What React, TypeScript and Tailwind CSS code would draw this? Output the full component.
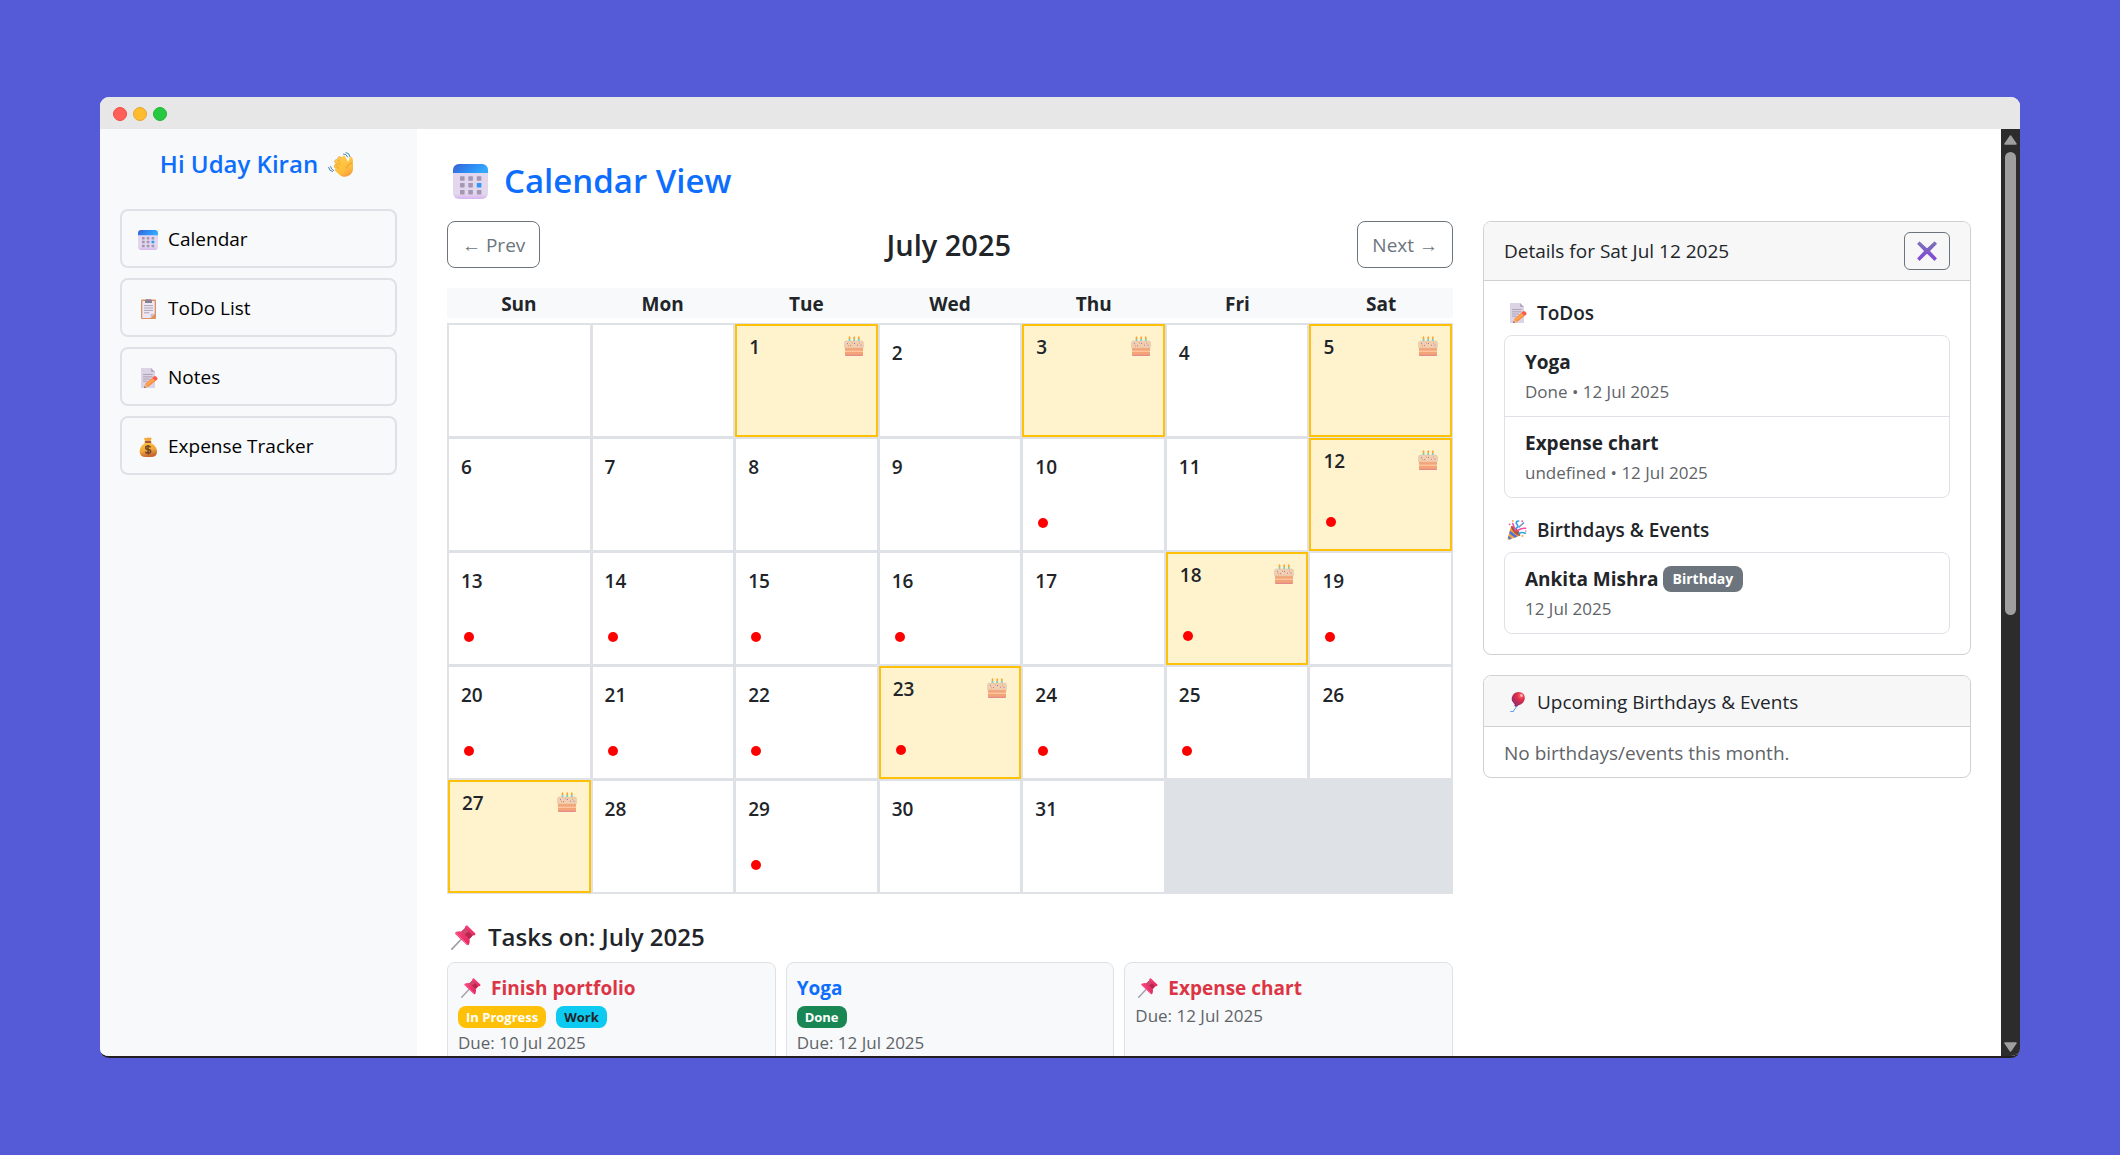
import type { ReactNode } from "react";

function Svg({ size, box = 20, children }: { size: string; box?: number; children: ReactNode }) {
  return (
    <svg viewBox={`0 0 ${box} ${box}`} className={`${size} shrink-0`} aria-hidden="true">
      {children}
    </svg>
  );
}

const S = "size-5";

function CalendarIcon({ size = S }: { size?: string }) {
  const cols = [7, 15.3, 23.8];
  const rows = [12.3, 19, 26];
  return (
    <Svg size={size} box={35}>
      <defs>
        <linearGradient id="calBand" x1="0" x2="1" y1="0" y2="0.3">
          <stop offset="0" stopColor="#3a5fd0" />
          <stop offset="0.5" stopColor="#2f86f0" />
          <stop offset="1" stopColor="#32a8ff" />
        </linearGradient>
        <linearGradient id="calPage" x1="0" x2="0" y1="0" y2="1">
          <stop offset="0.85" stopColor="#e3d7ee" />
          <stop offset="1" stopColor="#d6b4f0" />
        </linearGradient>
      </defs>
      <rect width="35" height="35" rx="6" fill="url(#calPage)" />
      <path d="M0 9V6a6 6 0 0 1 6-6h23a6 6 0 0 1 6 6v3z" fill="url(#calBand)" />
      {rows.map((y, r) =>
        cols.map((x, c) => (
          <rect key={`${r}${c}`} x={x} y={y} width="4.6" height="4.4" rx="0.6" fill={r === 1 && c === 2 ? "#2f97f7" : "#a596b3"} />
        )),
      )}
    </Svg>
  );
}

function ClipboardIcon() {
  return (
    <Svg size={S}>
      <rect x="3" y="0.5" width="15" height="19.5" rx="1" fill="#dd9160" />
      <path d="M4.3 2h12.4v13l-4 4H4.3z" fill="#eee8f5" />
      <path d="M16.7 14.8l-4.1 4.1v-3.2q0-.9.9-.9z" fill="#c9bfd6" />
      <path d="M7 2q0-1.7 1.7-1.7h3.6Q14 .3 14 2v2H7z" fill="#8b8192" />
      <path d="M6 6.6h9M6 9h9M6 11.400h9M6 13.800h5.500" stroke="#a49bb2" strokeWidth="0.9" />
    </Svg>
  );
}

function NotesIcon() {
  return (
    <Svg size={S}>
      <path d="M3 0h10l4 4v16H3z" fill="#dcd3e4" />
      <path d="M13 0l4 4h-3.200q-.8 0-.8-.8z" fill="#b5aabd" />
      <path d="M5 6.500h9.500M5 8.800h9.500M5 11h7M5 13.200h4.500" stroke="#a79db0" strokeWidth="0.9" />
      <path d="M6.200 19.800l1.200-4 7-6 3 3.200-7.400 6z" fill="#ff8a35" />
      <path d="M8.300 16l7.500-5.800 1.200 1.300-7.800 6.200z" fill="#ffa75a" />
      <path d="M6.200 19.800l1.200-4 2.800 3.100z" fill="#e8b48a" />
      <path d="M6.200 19.800l.5-1.600 1.100 1.200z" fill="#5a3a34" />
      <path d="M14.400 9.800l1.400-1.300q1.100-.9 2.300.1l1.100 1.200q.8 1.100-.2 2l-1.600 1.200z" fill="#fa5a4c" />
    </Svg>
  );
}

function MoneyBagIcon() {
  return (
    <Svg size={S}>
      <defs>
        <linearGradient id="bag" x1="0" x2="0.3" y1="0" y2="1">
          <stop offset="0" stopColor="#ffc63d" />
          <stop offset="0.6" stopColor="#f0a83a" />
          <stop offset="1" stopColor="#c8682f" />
        </linearGradient>
      </defs>
      <path d="M7.300 4.800L6 1.200q1-.8 2 0 1.400-1.300 3-.5 1.500-.8 2.700.4l-1.400 3.700z" fill="#f5a93a" />
      <path d="M7.400 5.500h5.200q6.400 4 6.400 9 0 5.500-6 5.500H7.600Q2 20 1.600 14.500q0-5 5.800-9z" fill="url(#bag)" />
      <rect x="6.600" y="4.100" width="6.800" height="2" rx="1" fill="#a7563b" />
      <path d="M12.600 10.400q-.7-1.300-2.500-1.300-2.400 0-2.400 1.700 0 1.500 2.400 1.800 2.600.3 2.600 2t-2.600 1.700q-2.100 0-2.700-1.500M10.100 7.900v9.700" fill="none" stroke="#71432c" strokeWidth="1.500" />
    </Svg>
  );
}

function WaveIcon() {
  return (
    <Svg size="size-[25px]" box={25}>
      <defs>
        <linearGradient id="hand" x1="0.2" x2="0.7" y1="0" y2="1">
          <stop offset="0" stopColor="#ffcb45" />
          <stop offset="0.7" stopColor="#ffbc3c" />
          <stop offset="1" stopColor="#f59a3c" />
        </linearGradient>
      </defs>
      <g strokeLinecap="round" fill="none">
        <path d="M14 18.500L8 14.200M14.500 15L8.500 9.500M16.500 12L11.500 6.500" stroke="#e09a35" strokeWidth="4.200" />
        <path d="M14 18.500L8 14.200M14.500 15L8.500 9.500M16.500 12L11.500 6.500M18.500 10.500L15.700 5.600" stroke="#ffc743" strokeWidth="3.400" />
      </g>
      <path d="M18.600 10.500q2.600-.9 2.900-4.600.5-1.500 1.900-.9 1.600.8 1.600 3.900v8.300q0 3.400-2.700 5.500-4.400 3.300-8.500 1.500-2.200-1-7.200-6.300l3-4L13 10l3.800-2.500z" fill="url(#hand)" />
      <path d="M23.600 11.200q-4.400 1.100-5.100 5M10.500 15.900l-2-1.600M11.800 12.800L9.800 11" fill="none" stroke="#df952f" strokeWidth="0.800" strokeLinecap="round" />
      <path d="M15.500 2q2.800-.3 4.100 2.900M18 .6q3.400.2 4 4M2.600 14.700q.3 2.900 3.100 3.900M.6 15.400q.4 3.400 3.800 4.200" fill="none" stroke="#4384ad" strokeWidth="1" strokeLinecap="round" />
    </Svg>
  );
}

function CakeIcon() {
  return (
    <Svg size={S}>
      <path d="M5.500 2.800v3M10.200 2.800v3M14.800 2.800v3" stroke="#61d3e3" strokeWidth="1.800" />
      <path d="M5.500 0q2 2 0 3.600-2-1.600 0-3.600zM10.200 0q2 2 0 3.600-2-1.600 0-3.600zM14.800 0q2 2 0 3.600-2-1.600 0-3.600z" fill="#ffa52e" />
      <path d="M1 11h18v7.500q0 1.500-1.500 1.500h-15Q1 20 1 18.500z" fill="#f2a477" />
      <path d="M1 14.600h18v1.300H1z" fill="#ffc9a5" />
      <path d="M1 18.800h18q0 1.200-1.500 1.200h-15Q1 20 1 18.800z" fill="#e5898d" />
      <path d="M.5 7Q.5 5 2.300 5h15.400q1.800 0 1.800 2v4.300q-.6 1.600-1.900.4-1.300 1.100-2.600 0-1.300 1.100-2.600 0-1.300 1.100-2.600 0-1.300 1.100-2.600 0-1.300 1.100-2.600 0-1.300 1.100-2.600 0-1.200 1.200-1.500-.4z" fill="#f0cfaf" stroke="#e2b795" strokeWidth="0.400" />
      <path d="M3 7.700h1M10 7.500h1M16.500 9.200h1" stroke="#8f6ee8" strokeWidth="1" />
      <path d="M6 9.600h1M13 9.200h1" stroke="#e4609a" strokeWidth="1" />
      <path d="M8 7h1M15 7.200h1M4 9.800h1" stroke="#ec8b3a" strokeWidth="0.800" />
    </Svg>
  );
}

function CrossIcon() {
  return (
    <Svg size={S}>
      <defs>
        <linearGradient id="cross" x1="0" x2="0" y1="0" y2="1">
          <stop offset="0" stopColor="#7a71b8" />
          <stop offset="1" stopColor="#8248d6" />
        </linearGradient>
      </defs>
      <path d="M2.500 1.200L10 8.300l7.500-7.100 1.700 1.600-7.100 7.200 7.100 7.400-1.700 1.600-7.500-7.200L2.500 19 .9 17.400 8 10 .9 2.800z" fill="url(#cross)" stroke="url(#cross)" strokeWidth="1.200" strokeLinejoin="round" />
    </Svg>
  );
}

function PartyIcon() {
  return (
    <Svg size={S}>
      <path d="M4 6.300L13.300 15.500 2 19.700q-1.600.3-1.400-1.200z" fill="#f5a93b" />
      <path d="M3 10.400l7.600 6.200-2.800 1.100-5.500-4.300zM1.600 15.600l3.300 3.100-2.400.9-1.500-1.500z" fill="#5572d8" />
      <path d="M4 6.300q1.600-1.300 5.500 2.500t3.800 6.700q-1.600 1.300-5.500-2.300T4 6.300z" fill="#b3523f" />
      <path d="M8.300 10.300q-1.300-3.300-2.500-6.800M10.500 10.500Q14.600 8 18.700 8.300" fill="none" stroke="#f74ba6" strokeWidth="1.600" strokeLinecap="round" />
      <path d="M9 8.500Q12.300 6.400 9.300 3.400q-.4-2.300 2.400-2.400M12 13.600q2.500-2 6.300-.4" fill="none" stroke="#35a4e6" strokeWidth="1.700" strokeLinecap="round" />
      <path d="M11.500 7.500l5.500-5" stroke="#3f8df0" strokeWidth="1.300" />
      <g fill="#ffa53c"><circle cx="5.800" cy="1" r="0.900" /><circle cx="14" cy="5" r="0.800" /><circle cx="15.500" cy="16" r="1" /></g>
      <g fill="#f74ba6"><circle cx="2.600" cy="4.300" r="0.900" /><circle cx="15.200" cy="1.200" r="0.900" /><circle cx="18.800" cy="11" r="0.700" /></g>
    </Svg>
  );
}

function BalloonIcon() {
  return (
    <Svg size={S}>
      <defs>
        <radialGradient id="balloon" cx="0.700" cy="0.250" r="0.800">
          <stop offset="0" stopColor="#ff6d6d" />
          <stop offset="0.350" stopColor="#e22f48" />
          <stop offset="1" stopColor="#8c2a70" />
        </radialGradient>
      </defs>
      <path d="M8.300 13.500q1.600 2-.3 3.300-1.300 1.200-1.600 2.800H3.200" fill="none" stroke="#4e9df3" strokeWidth="1" />
      <path d="M11.300 0Q18 .4 17.800 6.500 17 12 11 13.400l-1 1.300-2.600-.8.300-1.500Q4 9 4.800 5.600 6.200.2 11.300 0z" fill="url(#balloon)" />
      <ellipse cx="14.500" cy="3.600" rx="1.200" ry="1.500" fill="#ffc0bd" transform="rotate(-35 14.500 3.600)" />
    </Svg>
  );
}

function PinIcon({ size = S }: { size?: string }) {
  return (
    <Svg size={size} box={25}>
      <defs>
        <linearGradient id="pin" x1="0" x2="1" y1="0" y2="1">
          <stop offset="0" stopColor="#ff4f86" />
          <stop offset="1" stopColor="#d91e55" />
        </linearGradient>
      </defs>
      <path d="M10 14.500L.9 24.200" stroke="#a79fae" strokeWidth="1.800" strokeLinecap="round" />
      <path d="M4.500 9.200q-1-1.400.8-2.400 2.500-.9 5.200-.3L14 3.300q-.3-3.600 2.300-2.700l7.800 7.600q1.300 2.300-2.500 2.200l-3.200 3.500q.8 2.800-.5 5.700-1 1.200-2.200.2z" fill="url(#pin)" />
      <path d="M10.500 6.500l7.900 7.400 3.200-3.500L14 3.300z" fill="#b9264e" />
      <path d="M10.500 6.500L14 3.300l3.400 3.300-3.700 2.900z" fill="#cf4a6c" />
      <path d="M5 8.500l11.500 10.700" stroke="#ff6a9a" strokeWidth="1" strokeLinecap="round" />
    </Svg>
  );
}

const nav = [
  { label: "Calendar", icon: <CalendarIcon /> },
  { label: "ToDo List", icon: <ClipboardIcon /> },
  { label: "Notes", icon: <NotesIcon /> },
  { label: "Expense Tracker", icon: <MoneyBagIcon /> },
];

const weekdays = ["Sun", "Mon", "Tue", "Wed", "Thu", "Fri", "Sat"];
const birthdays = [1, 3, 5, 12, 18, 23, 27];
const taskDays = [10, 12, 13, 14, 15, 16, 18, 19, 20, 21, 22, 23, 24, 25, 29];
const days: (number | null)[] = [null, null, ...Array.from({ length: 31 }, (_, i) => i + 1)];

function Day({ day }: { day: number | null }) {
  if (day === null) return <div className="border border-[#dee2e6] bg-white" />;
  const dot = taskDays.includes(day) && <span className="ml-[3px] size-2.5 rounded-full bg-[#ff0000]" />;
  if (birthdays.includes(day)) {
    return (
      <div className="flex flex-col justify-between border-2 border-[#ffc107] bg-[#fff3cd] px-3 pt-2 pb-[22px]">
        <div className="flex items-start justify-between">
          <span className="leading-[26px]">{day}</span>
          <span className="pt-0.5">
            <CakeIcon />
          </span>
        </div>
        {dot}
      </div>
    );
  }
  return (
    <div className="flex flex-col justify-between border border-[#dee2e6] bg-white px-3 pt-[15px] pb-[22px]">
      <span className="leading-[26px]">{day}</span>
      {dot}
    </div>
  );
}

function Entry({ title, meta, badge }: { title: string; meta: string; badge?: string }) {
  return (
    <li className="px-5 pt-2.5 pb-2.5">
      <div className="flex items-center gap-1 leading-8">
        <strong className="font-bold">{title}</strong>
        {badge && <span className="rounded-lg bg-[#6c757d] px-2.5 text-sm leading-[26px] font-bold text-white">{badge}</span>}
      </div>
      <div className="text-[17px] leading-7 text-[#5f6469]">{meta}</div>
    </li>
  );
}

function TaskCard({ title, due, pinned, badges = [] }: { title: string; due: string; pinned?: boolean; badges?: { text: string; style: string }[] }) {
  return (
    <article className="min-h-[120px] flex-1 rounded-lg border border-[#dee2e6] bg-[#f8f9fa] p-2.5">
      <h3 className={pinned ? "flex items-center gap-2.5 pl-[3px] leading-[30px] font-bold text-[#dc3545]" : "leading-[30px] font-bold text-[#0d6efd]"}>
        {pinned && <PinIcon />}
        {title}
      </h3>
      {badges.length > 0 && (
        <div className="flex gap-2.5 pt-[3px] pb-0.5">
          {badges.map((b) => (
            <span key={b.text} className={`rounded-lg px-2 text-[13px] leading-[22px] font-bold ${b.style}`}>
              {b.text}
            </span>
          ))}
        </div>
      )}
      <p className="text-[17px] leading-[26px] text-[#5f6469]">Due: {due}</p>
    </article>
  );
}

export default function App() {
  return (
    <div className="flex h-screen flex-col bg-[#555ad6] px-[100px] py-[97px] font-['Open_Sans','Noto_Sans',sans-serif] text-[19px] text-[#212529]">
      <div className="flex min-h-0 flex-1 flex-col overflow-hidden rounded-[9px] border-b-2 border-[#231f20] bg-white">
        <header className="flex h-8 shrink-0 items-center gap-1.5 bg-[#e7e7e7] px-[13px] pt-0.5">
          <span className="size-3.5 rounded-full border border-[#f04b44] bg-[#ff5f57]" />
          <span className="size-3.5 rounded-full border border-[#e8a530] bg-[#febc2e]" />
          <span className="size-3.5 rounded-full border border-[#1fb636] bg-[#28c840]" />
        </header>

        <div className="flex min-h-0 flex-1">
          <aside className="w-[317px] shrink-0 bg-[#f8f9fb] p-5">
            <h2 className="mb-[30px] flex items-center justify-center gap-2.5 pr-1 text-[24px] leading-[30px] font-semibold text-[#0d6efd]">
              Hi Uday Kiran
              <WaveIcon />
            </h2>
            <nav className="flex flex-col gap-2.5">
              {nav.map((n) => (
                <button key={n.label} type="button" className="flex h-[59px] items-center gap-2.5 rounded-lg border-2 border-[#dee2e6] px-4 pt-0.5 text-left text-black">
                  {n.icon}
                  {n.label}
                </button>
              ))}
            </nav>
          </aside>

          <main className="min-w-0 flex-1 overflow-hidden px-[30px] pt-[31px]">
            <h1 className="mb-[19px] flex items-center gap-4 pl-1.5 text-[33px] leading-[42px] font-semibold text-[#0d6efd]">
              <CalendarIcon size="size-[35px]" />
              Calendar View
            </h1>

            <div className="-mx-[15px] flex items-start">
              <section className="w-2/3 px-[15px]">
                <div className="mb-5 flex items-center justify-between">
                  <button type="button" className="h-[47px] rounded-lg border border-[#6c757d] px-3.5 pt-0.5 text-[#6c757d]">
                    ← Prev
                  </button>
                  <h2 className="text-[29px] leading-9 font-semibold">July 2025</h2>
                  <button type="button" className="h-[47px] rounded-lg border border-[#6c757d] px-3.5 pt-0.5 text-[#6c757d]">
                    Next →
                  </button>
                </div>

                <div className="mb-[5px] grid grid-cols-7 bg-[#f8f9fa] pt-0.5 text-center leading-7 font-bold">
                  {weekdays.map((d) => (
                    <div key={d}>{d}</div>
                  ))}
                </div>
                <div className="grid auto-rows-[113px] grid-cols-7 gap-px border border-[#dee2e6] bg-[#dee2e6] font-semibold">
                  {days.map((d, i) => (
                    <Day key={i} day={d} />
                  ))}
                </div>

                <h2 className="mt-7 mb-2.5 flex items-center gap-3 pl-1 text-[24px] leading-[30px] font-semibold">
                  <PinIcon size="size-[25px]" />
                  Tasks on: July 2025
                </h2>
                <div className="flex gap-2.5">
                  <TaskCard
                    pinned
                    title="Finish portfolio"
                    due="10 Jul 2025"
                    badges={[
                      { text: "In Progress", style: "bg-[#ffc107] text-white" },
                      { text: "Work", style: "bg-[#0dcaf0] text-[#212529]" },
                    ]}
                  />
                  <TaskCard title="Yoga" due="12 Jul 2025" badges={[{ text: "Done", style: "bg-[#198754] text-white" }]} />
                  <TaskCard pinned title="Expense chart" due="12 Jul 2025" />
                </div>
              </section>

              <aside className="flex w-1/3 flex-col gap-5 px-[15px]">
                <section className="overflow-hidden rounded-lg border border-[#cfd0d1]">
                  <div className="flex items-center justify-between border-b border-[#cfd0d1] bg-[#f7f7f7] px-5 py-2.5">
                    <span>Details for Sat Jul 12 2025</span>
                    <button type="button" aria-label="Close details" className="flex h-[38px] w-[46px] items-center justify-center rounded-md border border-[#6c757d]">
                      <CrossIcon />
                    </button>
                  </div>
                  <div className="p-5">
                    <h3 className="mb-2.5 flex items-center gap-2.5 pl-[3px] leading-6 font-semibold">
                      <NotesIcon />
                      ToDos
                    </h3>
                    <ul className="mb-5 divide-y divide-[#dee2e6] rounded-lg border border-[#dee2e6]">
                      <Entry title="Yoga" meta="Done • 12 Jul 2025" />
                      <Entry title="Expense chart" meta="undefined • 12 Jul 2025" />
                    </ul>
                    <h3 className="mb-2.5 flex items-center gap-2.5 pl-[3px] leading-6 font-semibold">
                      <PartyIcon />
                      Birthdays &amp; Events
                    </h3>
                    <ul className="rounded-lg border border-[#dee2e6]">
                      <Entry title="Ankita Mishra" meta="12 Jul 2025" badge="Birthday" />
                    </ul>
                  </div>
                </section>

                <section className="overflow-hidden rounded-lg border border-[#cfd0d1]">
                  <h3 className="flex items-center gap-2.5 border-b border-[#cfd0d1] bg-[#f7f7f7] pt-[11px] pr-5 pb-[9px] pl-[23px] leading-[30px]">
                    <BalloonIcon />
                    Upcoming Birthdays &amp; Events
                  </h3>
                  <p className="px-5 pt-[11px] pb-[9px] leading-[30px] text-[#5f6469]">No birthdays/events this month.</p>
                </section>
              </aside>
            </div>
          </main>

          <div className="flex w-[19px] shrink-0 flex-col items-center bg-[#2c2c2c] pt-1.5 pb-1">
            <svg viewBox="0 0 13 10" className="mb-[7px] h-2.5 w-[13px]" aria-hidden="true">
              <path d="M6.500 1L12 9H1z" fill="#9f9f9f" stroke="#9f9f9f" strokeWidth="1.500" strokeLinejoin="round" />
            </svg>
            <div className="h-[463px] w-[11px] rounded-full bg-[#9f9f9f]" />
            <svg viewBox="0 0 13 10" className="mt-auto h-2.5 w-[13px]" aria-hidden="true">
              <path d="M6.500 9L12 1H1z" fill="#9f9f9f" stroke="#9f9f9f" strokeWidth="1.500" strokeLinejoin="round" />
            </svg>
          </div>
        </div>
      </div>
    </div>
  );
}
